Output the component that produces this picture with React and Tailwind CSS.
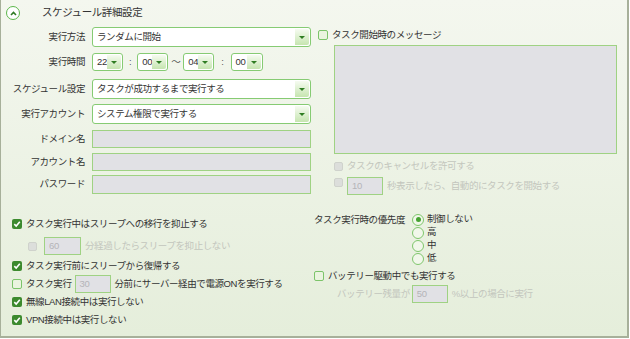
import React from "react"

const font = "font-['Liberation_Sans','Noto_Sans_CJK_JP',sans-serif]"

function Arrow() {
  return (
    <div className="flex h-full w-[14px] items-center justify-center rounded-r-[2px] bg-gradient-to-b from-[#f6fbf1] to-[#c6e5b0]">
      <div className="h-0 w-0 border-x-[3px] border-t-[3px] border-x-transparent border-t-[#2f7d22]" />
    </div>
  )
}

function Select({ text, className }) {
  return (
    <div className={`flex items-center rounded-[3px] border border-[#86cb73] bg-white pr-[1px] ${className}`}>
      <span className="flex-1 truncate pl-[4px] text-[#333]">{text}</span>
      <div className="h-[calc(100%-2px)]">
        <Arrow />
      </div>
    </div>
  )
}

function Field({ value, className }) {
  return (
    <div className={`flex items-center border border-[#9fd283] bg-[#e1e1e5] pl-[4px] text-[#b4b4b8] ${className}`}>
      {value}
    </div>
  )
}

function Check({ state }) {
  if (state === "on")
    return (
      <div className="flex h-[10px] w-[10px] shrink-0 items-center justify-center rounded-[2px] bg-[#3c8a2e]">
        <svg width="8" height="8" viewBox="0 0 8 8">
          <path d="M1.3 4.2 L3.2 6 L6.8 1.8" fill="none" stroke="#fff" strokeWidth="1.6" />
        </svg>
      </div>
    )
  if (state === "off")
    return <div className="h-[10px] w-[10px] shrink-0 rounded-[2px] border border-[#7cc46a] bg-[#eaf4df]" />
  return <div className="h-[9px] w-[9px] shrink-0 rounded-[2px] border border-[#cfd2cc] bg-[#dcdedb]" />
}

function Radio({ on, label }) {
  return (
    <div className="flex h-[13px] items-center gap-[3px]">
      <div className="flex h-[12px] w-[12px] items-center justify-center rounded-full border-[1.5px] border-[#7fc66c] bg-[#f1f7ea]">
        {on && <div className="h-[5px] w-[5px] rounded-full bg-[#46a332]" />}
      </div>
      <span className="text-[#333]">{label}</span>
    </div>
  )
}

function Row({ label, children, className }) {
  return (
    <div className={`flex items-center ${className}`}>
      <div className="w-[84px] text-right text-[#333]">{label}</div>
      <div className="ml-[7px] flex items-center">{children}</div>
    </div>
  )
}

export default function App() {
  return (
    <div className="h-[339px] w-[630px] bg-white">
      <div
        className={`flex h-[338px] w-[629px] flex-col border-b-2 border-l border-r-2 border-[#a7b09a] bg-gradient-to-b from-[#f4f7ef] to-[#e5eedb] text-[9.5px] tracking-[-0.4px] ${font}`}
      >
        <div className="flex h-[20px] items-center pl-[5px] pt-[6px]">
          <div className="flex h-[14px] w-[14px] items-center justify-center rounded-full border-[1.5px] border-[#5cb74b] bg-white">
            <svg width="7" height="5" viewBox="0 0 7 5">
              <path d="M1 4 L3.5 1.5 L6 4" fill="none" stroke="#2e7a23" strokeWidth="1.6" />
            </svg>
          </div>
          <span className="ml-[22px] text-[10.5px] text-[#333]">スケジュール詳細設定</span>
        </div>

        <div className="flex">
          <div className="w-[311px]">
            <Row label="実行方法" className="mt-[7px]">
              <Select text="ランダムに開始" className="h-[20px] w-[219px]" />
            </Row>
            <Row label="実行時間" className="mt-[6px]">
              <Select text="22" className="h-[18px] w-[31px]" />
              <span className="mx-[6px] text-[#555]">:</span>
              <Select text="00" className="h-[18px] w-[31px]" />
              <span className="mx-[3px] text-[#555]">〜</span>
              <Select text="04" className="h-[18px] w-[31px]" />
              <span className="mx-[7px] text-[#555]">:</span>
              <Select text="00" className="h-[18px] w-[32px]" />
            </Row>
            <Row label="スケジュール設定" className="mt-[8px]">
              <Select text="タスクが成功するまで実行する" className="h-[20px] w-[219px]" />
            </Row>
            <Row label="実行アカウント" className="mt-[5px]">
              <Select text="システム権限で実行する" className="h-[20px] w-[219px]" />
            </Row>
            <Row label="ドメイン名" className="mt-[6px]">
              <Field className="h-[18px] w-[219px]" />
            </Row>
            <Row label="アカウント名" className="mt-[5px]">
              <Field className="h-[18px] w-[219px]" />
            </Row>
            <Row label="パスワード" className="mt-[4px]">
              <Field className="h-[19px] w-[219px]" />
            </Row>
          </div>

          <div className="ml-[6px] w-[300px]">
            <div className="mt-[9px] flex h-[12px] items-center gap-[4px]">
              <Check state="off" />
              <span className="text-[#333]">タスク開始時のメッセージ</span>
            </div>
            <div className="ml-[16px] mt-[4px] h-[109px] w-[283px] border border-[#9fd283] bg-[#e1e1e5]" />
            <div className="ml-[16px] mt-[7px] flex h-[10px] items-center gap-[4px] text-[#c3c6bd]">
              <Check />
              <span>タスクのキャンセルを許可する</span>
            </div>
            <div className="ml-[16px] mt-[6px] flex h-[18px] items-center">
              <div className="self-start pt-[1px]">
                <Check />
              </div>
              <Field value="10" className="ml-[4px] h-[18px] w-[36px]" />
              <span className="ml-[4px] text-[#c3c6bd]">秒表示したら、自動的にタスクを開始する</span>
            </div>
          </div>
        </div>

        <div className="mt-[18px] flex">
          <div className="w-[313px] pl-[11px]">
            <div className="mt-[5px] flex h-[12px] items-center gap-[4px]">
              <Check state="on" />
              <span className="text-[#333]">タスク実行中はスリープへの移行を抑止する</span>
            </div>
            <div className="ml-[16px] mt-[7px] flex h-[18px] items-center">
              <Check />
              <Field value="60" className="ml-[7px] h-[18px] w-[37px]" />
              <span className="ml-[4px] text-[#c3c6bd]">分経過したらスリープを抑止しない</span>
            </div>
            <div className="mt-[5px] flex h-[12px] items-center gap-[4px]">
              <Check state="on" />
              <span className="text-[#333]">タスク実行前にスリープから復帰する</span>
            </div>
            <div className="mt-[3px] flex h-[18px] items-center">
              <Check state="off" />
              <span className="ml-[4px] text-[#333]">タスク実行</span>
              <Field value="30" className="ml-[3px] h-[18px] w-[36px]" />
              <span className="ml-[4px] text-[#333]">分前にサーバー経由で電源ONを実行する</span>
            </div>
            <div className="mt-[3px] flex h-[12px] items-center gap-[4px]">
              <Check state="on" />
              <span className="text-[#333]">無線LAN接続中は実行しない</span>
            </div>
            <div className="mt-[6px] flex h-[12px] items-center gap-[4px]">
              <Check state="on" />
              <span className="text-[#333]">VPN接続中は実行しない</span>
            </div>
          </div>

          <div className="w-[300px]">
            <div className="flex">
              <div className="w-[98px] leading-[13px] text-[#333]">タスク実行時の優先度</div>
              <div className="flex flex-col">
                <Radio on label="制御しない" />
                <Radio label="高" />
                <Radio label="中" />
                <Radio label="低" />
              </div>
            </div>
            <div className="mt-[5px] flex h-[12px] items-center gap-[4px]">
              <Check state="off" />
              <span className="text-[#333]">バッテリー駆動中でも実行する</span>
            </div>
            <div className="ml-[23px] mt-[3px] flex h-[18px] items-center">
              <span className="text-[#c3c6bd]">バッテリー残量が</span>
              <Field value="50" className="ml-[2px] h-[18px] w-[36px]" />
              <span className="ml-[4px] text-[#c3c6bd]">%以上の場合に実行</span>
            </div>
          </div>
        </div>
      </div>
    </div>
  )
}
